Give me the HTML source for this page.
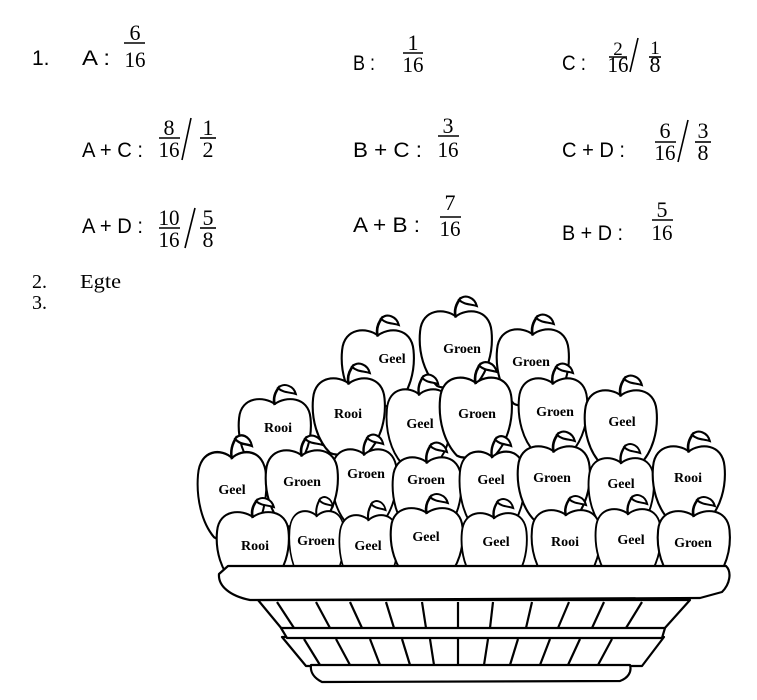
<!DOCTYPE html>
<html><head><meta charset="utf-8"><style>
html,body{margin:0;padding:0;background:#fff;}
svg{display:block}
.s{font-family:"Liberation Sans",sans-serif;font-size:21px;fill:#000}
.f{font-family:"Liberation Serif",serif;font-size:22px;fill:#000}
.a{font-family:"Liberation Serif",serif;font-size:14px;font-weight:bold;fill:#000}
.ap{fill:#fff;stroke:#000;stroke-width:2}
</style></head><body>
<svg width="757" height="700" viewBox="0 0 757 700" xmlns="http://www.w3.org/2000/svg">
<defs>
<g id="apple">
<path class="ap" d="M36,10 C26,2 4,2 2,24 C0,44 6,64 18,76 C26,80 32,76 36,74 C40,76 46,80 54,76 C66,64 72,44 70,24 C68,2 46,2 36,10 Z"/>
<path d="M36,11 C34,4 36,-2 41,-8" fill="none" stroke="#000" stroke-width="2.5"/>
<path d="M39,-6 C45,-12 54,-8 56,0 C50,-2 44,-1 39,-6 Z" fill="#fff" stroke="#000" stroke-width="2"/>
</g>
</defs>
<g>
<text class="s" x="32" y="65">1.</text>
<text class="s" x="82" y="65" textLength="28" lengthAdjust="spacingAndGlyphs">A :</text>
<text class="s" x="353" y="70" textLength="22" lengthAdjust="spacingAndGlyphs">B :</text>
<text class="s" x="562" y="70" textLength="24" lengthAdjust="spacingAndGlyphs">C :</text>
<text class="s" x="82" y="157" textLength="61" lengthAdjust="spacingAndGlyphs">A + C :</text>
<text class="s" x="353" y="157" textLength="69" lengthAdjust="spacingAndGlyphs">B + C :</text>
<text class="s" x="562" y="157" textLength="63" lengthAdjust="spacingAndGlyphs">C + D :</text>
<text class="s" x="82" y="233" textLength="61" lengthAdjust="spacingAndGlyphs">A + D :</text>
<text class="s" x="353" y="232" textLength="67" lengthAdjust="spacingAndGlyphs">A + B :</text>
<text class="s" x="562" y="240" textLength="61" lengthAdjust="spacingAndGlyphs">B + D :</text>
</g>
<g stroke="#000" stroke-width="1.6">
<line x1="124" y1="43" x2="145" y2="43"/>
<line x1="403" y1="53" x2="423" y2="53"/>
<line x1="609" y1="57" x2="627" y2="57"/><line x1="630" y1="72" x2="638" y2="38"/><line x1="649" y1="57" x2="661" y2="57"/>
<line x1="159" y1="138" x2="180" y2="138"/><line x1="182" y1="160" x2="191" y2="118"/><line x1="200" y1="138" x2="216" y2="138"/>
<line x1="438" y1="136" x2="459" y2="136"/>
<line x1="655" y1="142" x2="676" y2="142"/><line x1="678" y1="162" x2="688" y2="120"/><line x1="695" y1="142" x2="711" y2="142"/>
<line x1="159" y1="228" x2="180" y2="228"/><line x1="185" y1="248" x2="195" y2="208"/><line x1="200" y1="228" x2="216" y2="228"/>
<line x1="440" y1="217" x2="461" y2="217"/>
<line x1="652" y1="220" x2="673" y2="220"/>
</g>
<g text-anchor="middle">
<text class="f" x="135" y="40">6</text><text class="f" x="135" y="67" textLength="21" lengthAdjust="spacingAndGlyphs">16</text>
<text class="f" x="413" y="50">1</text><text class="f" x="413" y="72" textLength="21" lengthAdjust="spacingAndGlyphs">16</text>
<text class="f" x="618" y="55" style="font-size:19px">2</text><text class="f" x="618" y="72" textLength="21" lengthAdjust="spacingAndGlyphs">16</text>
<text class="f" x="655" y="54" style="font-size:19px">1</text><text class="f" x="655" y="72">8</text>
<text class="f" x="169" y="135">8</text><text class="f" x="169" y="157" textLength="21" lengthAdjust="spacingAndGlyphs">16</text>
<text class="f" x="208" y="135">1</text><text class="f" x="208" y="157">2</text>
<text class="f" x="448" y="133">3</text><text class="f" x="448" y="157" textLength="21" lengthAdjust="spacingAndGlyphs">16</text>
<text class="f" x="665" y="138">6</text><text class="f" x="665" y="160" textLength="21" lengthAdjust="spacingAndGlyphs">16</text>
<text class="f" x="703" y="138">3</text><text class="f" x="703" y="160">8</text>
<text class="f" x="169" y="225" textLength="21" lengthAdjust="spacingAndGlyphs">10</text><text class="f" x="169" y="247" textLength="21" lengthAdjust="spacingAndGlyphs">16</text>
<text class="f" x="208" y="225">5</text><text class="f" x="208" y="247">8</text>
<text class="f" x="450" y="210">7</text><text class="f" x="450" y="236" textLength="21" lengthAdjust="spacingAndGlyphs">16</text>
<text class="f" x="662" y="217">5</text><text class="f" x="662" y="240" textLength="21" lengthAdjust="spacingAndGlyphs">16</text>
</g>
<text class="f" x="32" y="288" style="font-size:20px">2.</text>
<text class="f" x="80" y="288" style="font-size:20px" textLength="41" lengthAdjust="spacingAndGlyphs">Egte</text>
<text class="f" x="32" y="309" style="font-size:20px">3.</text>

<g>
<use href="#apple" transform="translate(340,325) scale(1.05,1.05)"/><text class="a" x="392" y="363" text-anchor="middle">Geel</text>
<use href="#apple" transform="translate(418,306) scale(1.05,1.05)"/><text class="a" x="462" y="353" text-anchor="middle">Groen</text>
<use href="#apple" transform="translate(495,324) scale(1.05,1.05)"/><text class="a" x="531" y="366" text-anchor="middle">Groen</text>

<use href="#apple" transform="translate(237,394) scale(1.05,1.0)"/><text class="a" x="278" y="432" text-anchor="middle">Rooi</text>
<use href="#apple" transform="translate(385,384) scale(0.95,1.05)"/><text class="a" x="420" y="428" text-anchor="middle">Geel</text>
<use href="#apple" transform="translate(311,373) scale(1.05,1.05)"/><text class="a" x="348" y="418" text-anchor="middle">Rooi</text>
<use href="#apple" transform="translate(438,372) scale(1.05,1.1)"/><text class="a" x="477" y="418" text-anchor="middle">Groen</text>
<use href="#apple" transform="translate(517,373) scale(1.0,1.05)"/><text class="a" x="555" y="416" text-anchor="middle">Groen</text>
<use href="#apple" transform="translate(583,385) scale(1.05,1.05)"/><text class="a" x="622" y="426" text-anchor="middle">Geel</text>

<use href="#apple" transform="translate(196,446) scale(1.0,1.2)"/><text class="a" x="232" y="494" text-anchor="middle">Geel</text>
<use href="#apple" transform="translate(330,444) scale(0.95,1.05)"/><text class="a" x="366" y="478" text-anchor="middle">Groen</text>
<use href="#apple" transform="translate(264,445) scale(1.05,1.05)"/><text class="a" x="302" y="486" text-anchor="middle">Groen</text>
<use href="#apple" transform="translate(391,452) scale(1.0,1.05)"/><text class="a" x="426" y="484" text-anchor="middle">Groen</text>
<use href="#apple" transform="translate(458,446) scale(0.95,1.1)"/><text class="a" x="491" y="484" text-anchor="middle">Geel</text>
<use href="#apple" transform="translate(516,441) scale(1.05,1.05)"/><text class="a" x="552" y="482" text-anchor="middle">Groen</text>
<use href="#apple" transform="translate(587,453) scale(0.95,1.0)"/><text class="a" x="621" y="488" text-anchor="middle">Geel</text>
<use href="#apple" transform="translate(651,441) scale(1.05,1.05)"/><text class="a" x="688" y="482" text-anchor="middle">Rooi</text>

<use href="#apple" transform="translate(215,507) scale(1.05,1.0)"/><text class="a" x="255" y="550" text-anchor="middle">Rooi</text>
<use href="#apple" transform="translate(288,506) scale(0.8,1.0)"/><text class="a" x="316" y="545" text-anchor="middle">Groen</text>
<use href="#apple" transform="translate(338,510) scale(0.85,1.0)"/><text class="a" x="368" y="550" text-anchor="middle">Geel</text>
<use href="#apple" transform="translate(389,503) scale(1.05,1.0)"/><text class="a" x="426" y="541" text-anchor="middle">Geel</text>
<use href="#apple" transform="translate(460,508) scale(0.95,1.0)"/><text class="a" x="496" y="546" text-anchor="middle">Geel</text>
<use href="#apple" transform="translate(530,505) scale(1.0,1.0)"/><text class="a" x="565" y="546" text-anchor="middle">Rooi</text>
<use href="#apple" transform="translate(594,504) scale(0.95,1.0)"/><text class="a" x="631" y="544" text-anchor="middle">Geel</text>
<use href="#apple" transform="translate(656,506) scale(1.05,1.0)"/><text class="a" x="693" y="547" text-anchor="middle">Groen</text>
</g>

<g fill="#fff" stroke="#000" stroke-width="2.2" stroke-linejoin="round">
<path d="M258,600 L690,600 L664,629 L282,629 Z"/>
<path d="M282,637 L664,637 L642,666 L306,666 Z"/>
<path d="M228,566 L726,566 C732,572 730,584 722,592 L700,598 L250,600 C230,596 218,586 219,574 Z"/>
<path d="M281,628 L665,628 L662,638 L287,638 Z"/>
<path d="M311,665 L630,665 C632,672 628,678 620,681 L322,682 C314,678 310,672 311,665 Z"/>
</g>
<g stroke="#000" stroke-width="2.2">
<line x1="277" y1="602" x2="294" y2="628"/><line x1="316" y1="602" x2="330" y2="628"/>
<line x1="350" y1="602" x2="362" y2="628"/><line x1="386" y1="602" x2="394" y2="628"/>
<line x1="422" y1="602" x2="426" y2="628"/><line x1="458" y1="602" x2="458" y2="628"/>
<line x1="493" y1="602" x2="490" y2="628"/><line x1="532" y1="602" x2="526" y2="628"/>
<line x1="569" y1="602" x2="558" y2="628"/><line x1="604" y1="602" x2="592" y2="628"/>
<line x1="642" y1="602" x2="626" y2="628"/>
<line x1="304" y1="639" x2="320" y2="665"/><line x1="336" y1="639" x2="350" y2="665"/>
<line x1="370" y1="639" x2="380" y2="665"/><line x1="402" y1="639" x2="410" y2="665"/>
<line x1="430" y1="639" x2="434" y2="665"/><line x1="458" y1="639" x2="458" y2="665"/>
<line x1="488" y1="639" x2="484" y2="665"/><line x1="518" y1="639" x2="510" y2="665"/>
<line x1="550" y1="639" x2="540" y2="665"/><line x1="580" y1="639" x2="568" y2="665"/>
<line x1="612" y1="639" x2="598" y2="665"/>
</g>
</svg>
</body></html>
